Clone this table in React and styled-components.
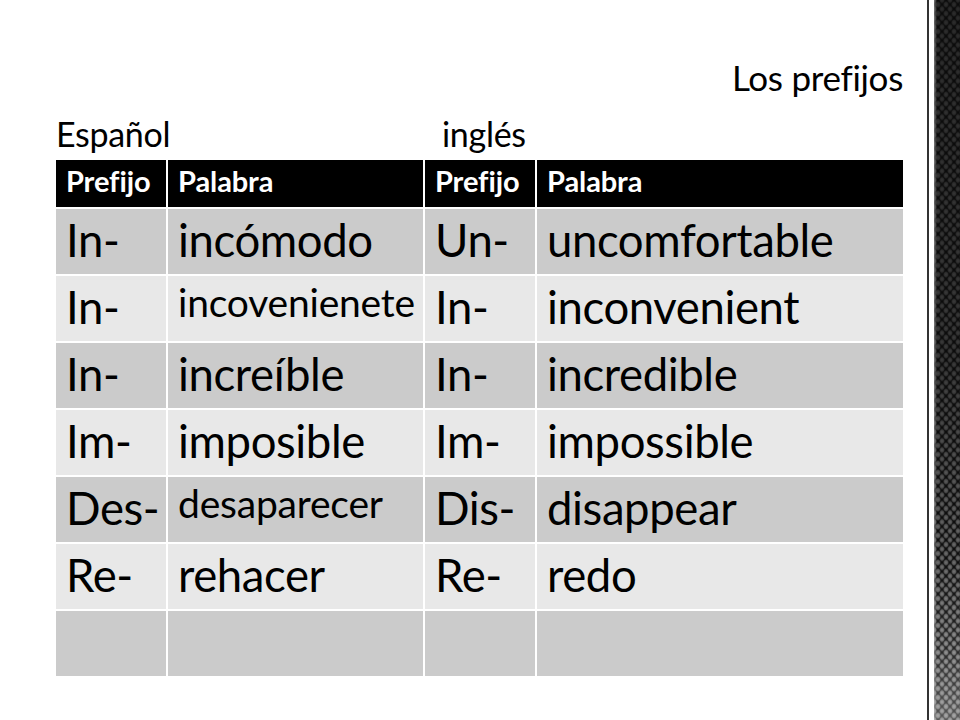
import React from "react";
import styled, { createGlobalStyle } from "styled-components";

const Global = createGlobalStyle`
  html, body { margin: 0; padding: 0; background: #fff; }
  body { font-family: Lato, "Open Sans", sans-serif; color: #000; }
`;

const Page = styled.div`
  display: flex;
  width: 960px;
  height: 720px;
  overflow: hidden;
  background: #fff;
`;

const Main = styled.main`
  flex: 1;
  display: flex;
  flex-direction: column;
  padding: 57px 24px 0 56px;
`;

const Title = styled.h1`
  margin: 0;
  align-self: flex-end;
  font-weight: 400;
  font-size: 35px;
  line-height: 40px;
  letter-spacing: -0.3px;
`;

const Labels = styled.div`
  display: flex;
  margin-top: 17px;
  height: 46px;
`;

const Label = styled.span`
  font-size: 34px;
  line-height: 40px;
  letter-spacing: -0.3px;
  width: ${(p) => p.$w || "auto"};
`;

const Table = styled.div`
  display: grid;
  grid-template-columns: 110px 255px 110px 366px;
  grid-auto-rows: 65px;
  grid-template-rows: 47px;
  gap: 2px;
  width: 847px;
  background: #fff;
`;

const HeadCell = styled.div`
  background: #000;
  color: #fff;
  font-weight: 700;
  font-size: 29px;
  letter-spacing: -0.1px;
  padding: 4px 0 0 10px;
  line-height: 34px;
`;

const Cell = styled.div`
  background: ${(p) => (p.$alt ? "#e8e8e8" : "#cbcbcb")};
  font-size: ${(p) => (p.$small ? "39px" : "45.5px")};
  line-height: ${(p) => (p.$small ? "40px" : "52px")};
  padding: ${(p) => (p.$small ? "6px 0 0 10px" : "5px 0 0 10px")};
  letter-spacing: ${(p) => (p.$small ? "-0.2px" : "-0.4px")};
  white-space: nowrap;
  overflow: hidden;
`;

const Rule = styled.div`
  width: 2px;
  background: #333;
  margin-right: 5px;
`;

const Strip = styled.div`
  width: 26px;
  background-color: #101010;
  background-image:
    linear-gradient(to right, rgba(190,190,190,0.55), rgba(0,0,0,0) 3px),
    linear-gradient(to bottom, rgba(10,10,10,0.72) 0%, rgba(10,10,10,0.6) 50%, rgba(10,10,10,0.2) 78%, rgba(255,255,255,0.1) 90%, rgba(255,255,255,0.3) 100%),
    radial-gradient(ellipse 3px 3.5px at 50% 50%, #8a8a8a 0%, #6a6a6a 55%, rgba(0,0,0,0) 100%),
    radial-gradient(ellipse 3px 3.5px at 50% 50%, #8a8a8a 0%, #6a6a6a 55%, rgba(0,0,0,0) 100%);
  background-size: 100% 100%, 100% 100%, 8px 9px, 8px 9px;
  background-position: 0 0, 0 0, 0 0, 4px 4.5px;
`;

const rows = [
  ["In-", "incómodo", "Un-", "uncomfortable"],
  ["In-", "incovenienete", "In-", "inconvenient", true],
  ["In-", "increíble", "In-", "incredible"],
  ["Im-", "imposible", "Im-", "impossible"],
  ["Des-", "desaparecer", "Dis-", "disappear", true],
  ["Re-", "rehacer", "Re-", "redo"],
  ["", "", "", ""],
];

export default function App() {
  return (
    <>
      <Global />
      <Page>
        <Main>
          <Title>Los prefijos</Title>
          <Labels>
            <Label $w="386px">Español</Label>
            <Label>inglés</Label>
          </Labels>
          <Table>
            {["Prefijo", "Palabra", "Prefijo", "Palabra"].map((h, i) => (
              <HeadCell key={i}>{h}</HeadCell>
            ))}
            {rows.map((r, ri) =>
              [0, 1, 2, 3].map((ci) => (
                <Cell
                  key={ri + "-" + ci}
                  $alt={ri % 2 === 1}
                  $small={ci === 1 && r[4]}
                >
                  {r[ci]}
                </Cell>
              ))
            )}
          </Table>
        </Main>
        <Rule />
        <Strip />
      </Page>
    </>
  );
}
